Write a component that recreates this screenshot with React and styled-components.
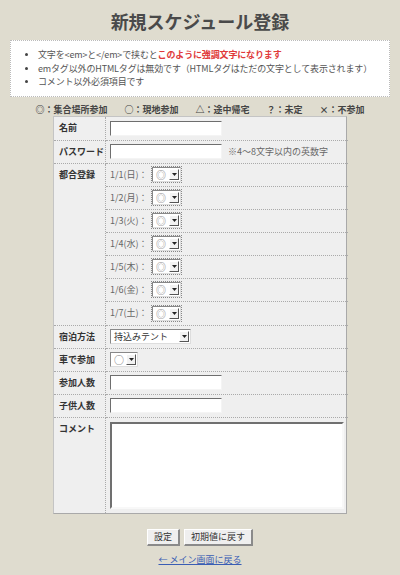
import React from "react";
import styled, { createGlobalStyle } from "styled-components";

const Global = createGlobalStyle`
  html, body { margin: 0; padding: 0; background: #dfdccf; }
  body { font-family: "Noto Sans CJK JP", "Noto Sans", sans-serif; color: #444; }
`;

const Page = styled.div`
  width: 400px;
  min-height: 575px;
  padding-top: 10px;
  box-sizing: border-box;
`;

const Title = styled.h1`
  margin: 0;
  text-align: center;
  font-size: 18px;
  line-height: 22px;
  font-weight: bold;
  color: #4a4a4a;
`;

const Notice = styled.ul`
  margin: 8px 10px 0;
  padding: 7px 0 7px 27px;
  background: #fff;
  border: 1px dotted #bbb;
  font-size: 9px;
  line-height: 13.5px;
  color: #555;
  letter-spacing: -0.15px;
  list-style: disc;
  li::marker { font-size: 8px; color: #444; }
`;

const Em = styled.span`
  color: #e03a3a;
  font-weight: bold;
`;

const Legend = styled.div`
  margin-top: 7px;
  display: flex;
  justify-content: center;
  gap: 17px;
  font-size: 9px;
  line-height: 12px;
  font-weight: bold;
  color: #444;
`;

const Table = styled.div`
  margin: 0 auto;
  width: 294px;
  box-sizing: border-box;
  border: 1px solid #a9a9a9;
  border-top-color: #c4c4c4;
  border-left-color: #c4c4c4;
  display: grid;
  grid-template-columns: 52px 1fr;
  background: #efefef;
  font-size: 9px;
`;

const Label = styled.div`
  padding: 5px 0 0 5px;
  font-weight: bold;
  color: #333;
  line-height: 12px;
  border-right: 1px dotted #aaa;
  border-bottom: ${(p) => (p.$last ? "none" : "1px dotted #aaa")};
  min-height: ${(p) => p.$h || 23}px;
  box-sizing: border-box;
`;

const Value = styled.div`
  display: flex;
  flex-direction: ${(p) => (p.$column ? "column" : "row")};
  align-items: ${(p) => (p.$column ? "stretch" : "center")};
  padding: ${(p) => (p.$column ? "0" : "0 4px")};
  min-height: ${(p) => p.$h || 23}px;
  border-bottom: ${(p) => (p.$last ? "none" : "1px dotted #aaa")};
  box-sizing: border-box;
  color: #666;
`;

const SubRow = styled.div`
  height: 23px;
  display: flex;
  align-items: center;
  padding-left: 4px;
  box-sizing: border-box;
  border-bottom: ${(p) => (p.$last ? "none" : "1px dotted #aaa")};
`;

const DateText = styled.span`
  width: 42px;
  color: #666;
  line-height: 12px;
`;

const TextInput = styled.div`
  width: 112px;
  height: 15px;
  box-sizing: border-box;
  background: #fff;
  border: 1px solid #eee;
  border-top-color: #6e6e6e;
  border-left-color: #6e6e6e;
  border-right-color: #f4f4f4;
  border-bottom-color: #f4f4f4;
`;

const Note = styled.span`
  margin-left: 6px;
  color: #666;
`;

const Select = styled.div`
  display: inline-flex;
  align-items: center;
  width: ${(p) => p.$w}px;
  height: 15px;
  box-sizing: border-box;
  background: #fff;
  border: 1px solid #888;
  border-right-color: #ddd;
  border-bottom-color: #ddd;
  outline: ${(p) => (p.$focus ? "1px dotted #888" : "none")};
  outline-offset: 0px;
  color: #777;
  font-size: 9px;
  line-height: 13px;
`;

const SelectText = styled.span`
  flex: 1;
  padding-left: 3px;
  white-space: nowrap;
  font-size: ${(p) => p.$fs || 9}px;
  color: ${(p) => p.$c || "#555"};
`;

const Arrow = styled.span`
  width: 10px;
  height: 11px;
  margin-right: 1px;
  box-sizing: border-box;
  background: #f2f2f2;
  border: 1px solid #fff;
  border-right-color: #555;
  border-bottom-color: #555;
  display: flex;
  align-items: center;
  justify-content: center;
`;

const ArrowIcon = () => (
  <svg width="5" height="3" viewBox="0 0 5 3">
    <path d="M0 0H5L2.5 3Z" fill="#222" />
  </svg>
);

const TextArea = styled.div`
  width: 234px;
  height: 87px;
  box-sizing: border-box;
  background: #fff;
  border: 2px solid #e8e8e8;
  border-top-color: #707070;
  border-left-color: #707070;
  border-right-color: #f8f8f8;
  border-bottom-color: #f8f8f8;
`;

const CommentCell = styled(Value)`
  align-items: flex-start;
  padding: 4px 4px;
`;

const Buttons = styled.div`
  display: flex;
  justify-content: center;
  gap: 4px;
  margin-top: 15px;
`;

const Button = styled.button`
  height: 17px;
  padding: 0 ${(p) => p.$px || 7}px;
  font-family: inherit;
  font-size: 9px;
  line-height: 13px;
  color: #333;
  background: #efefef;
  border: 1px solid #fff;
  border-right: 2px solid #8a8a8a;
  border-bottom: 2px solid #8a8a8a;
  cursor: pointer;
`;

const BackLink = styled.a`
  display: block;
  width: fit-content;
  margin: 8px auto 0;
  font-size: 9px;
  line-height: 12px;
  color: #3a5db4;
  text-decoration: underline;
`;

const dates = ["1/1(日)", "1/2(月)", "1/3(火)", "1/4(水)", "1/5(木)", "1/6(金)", "1/7(土)"];

const DropDown = ({ w, text, focus, color, fs }) => (
  <Select $w={w} $focus={focus}>
    <SelectText $c={color} $fs={fs}>{text}</SelectText>
    <Arrow>
      <ArrowIcon />
    </Arrow>
  </Select>
);

export default function App() {
  return (
    <Page>
      <Global />
      <Title>新規スケジュール登録</Title>
      <Notice>
        <li>
          文字を&lt;em&gt;と&lt;/em&gt;で挟むと<Em>このように強調文字になります</Em>
        </li>
        <li>emタグ以外のHTMLタグは無効です（HTMLタグはただの文字として表示されます）</li>
        <li>コメント以外必須項目です</li>
      </Notice>
      <Legend>
        <span>◎：集合場所参加</span>
        <span>○：現地参加</span>
        <span>△：途中帰宅</span>
        <span>？：未定</span>
        <span>×：不参加</span>
      </Legend>
      <Table>
        <Label $h={24}>名前</Label>
        <Value $h={24}>
          <TextInput />
        </Value>

        <Label>パスワード</Label>
        <Value>
          <TextInput />
          <Note>※4～8文字以内の英数字</Note>
        </Value>

        <Label>都合登録</Label>
        <Value $column>
          {dates.map((d, i) => (
            <SubRow key={d} $last={i === dates.length - 1}>
              <DateText>{d}：</DateText>
              <DropDown w={29} text="◎" focus color="#888" fs={10} />
            </SubRow>
          ))}
        </Value>

        <Label>宿泊方法</Label>
        <Value>
          <DropDown w={81} text="持込みテント" color="#333" />
        </Value>

        <Label>車で参加</Label>
        <Value>
          <DropDown w={28} text="○" color="#777" fs={10} />
        </Value>

        <Label>参加人数</Label>
        <Value>
          <TextInput />
        </Value>

        <Label>子供人数</Label>
        <Value>
          <TextInput />
        </Value>

        <Label $last $h={95}>コメント</Label>
        <CommentCell $last $h={95}>
          <TextArea />
        </CommentCell>
      </Table>
      <Buttons>
        <Button $px={6}>設定</Button>
        <Button $px={6}>初期値に戻す</Button>
      </Buttons>
      <BackLink href="#">← メイン画面に戻る</BackLink>
    </Page>
  );
}
